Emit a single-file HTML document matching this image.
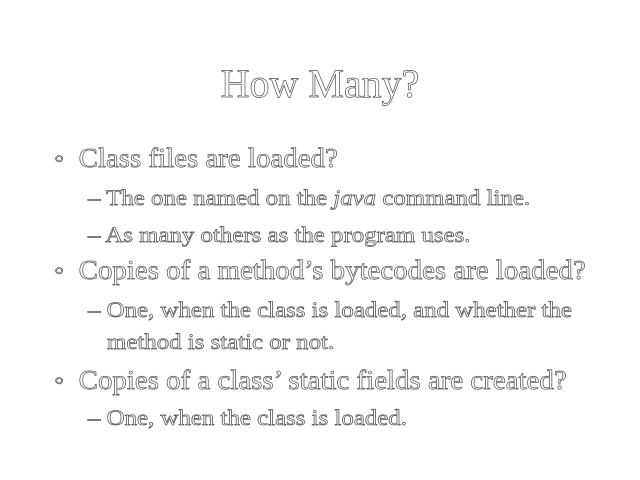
<!DOCTYPE html>
<html><head><meta charset="utf-8"><style>
html,body{margin:0;padding:0;background:#fff;width:640px;height:480px;overflow:hidden}
div{position:absolute;white-space:nowrap;line-height:1;font-family:"Liberation Serif",serif;color:#fff;-webkit-text-stroke:0.7px #555;transform-origin:0 0}
.t{font-size:40px;left:0;width:640px;text-align:center;top:64px}
.b{font-size:27px;left:54px;transform:scaleX(1.07)}
.s{font-size:22px;left:88px;transform:scaleX(1.13)}
</style></head><body>
<div class="t">How Many?</div>
<div class="b" style="top:145px">◦&nbsp; Class files are loaded?</div>
<div class="s" style="top:187px">– The one named on the <i>java</i> command line.</div>
<div class="s" style="top:224px">– As many others as the program uses.</div>
<div class="b" style="top:257px">◦&nbsp; Copies of a method’s bytecodes are loaded?</div>
<div class="s" style="top:299px">– One, when the class is loaded, and whether the</div>
<div class="s" style="top:331px;left:107px">method is static or not.</div>
<div class="b" style="top:367px">◦&nbsp; Copies of a class’ static fields are created?</div>
<div class="s" style="top:407px">– One, when the class is loaded.</div>
</body></html>
